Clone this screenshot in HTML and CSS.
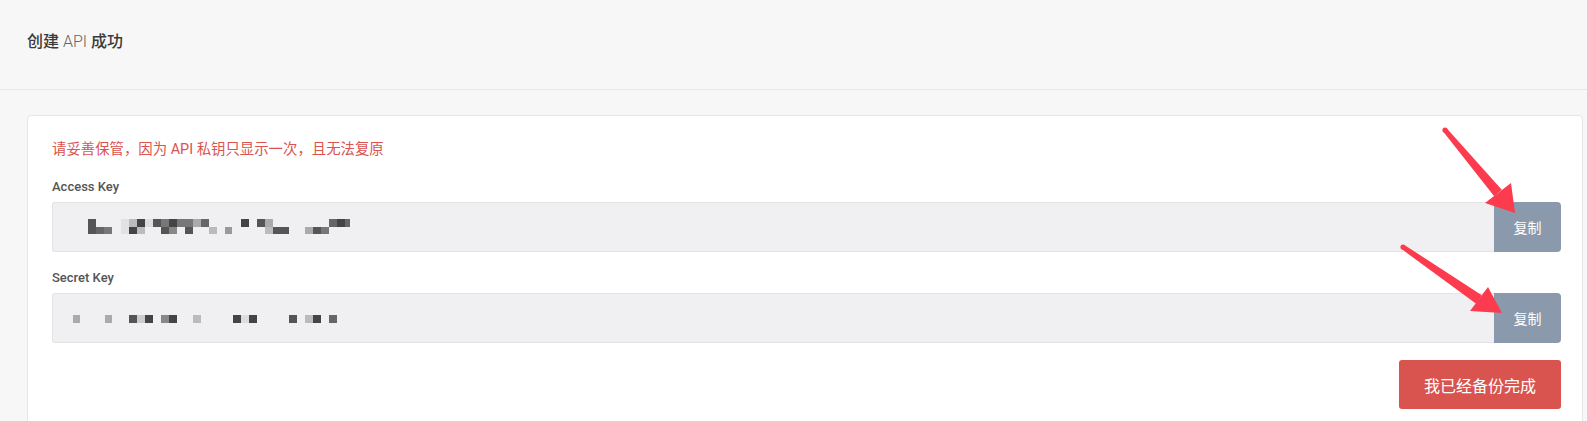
FILE: index.html
```html
<!DOCTYPE html>
<html>
<head>
<meta charset="utf-8">
<title>创建 API 成功</title>
<link rel="stylesheet" href="styles.css">
</head>
<body>

<div class="page-head">
	<h1>创建 <span class="light">API</span> 成功</h1>
</div>

<div class="main">
	<div class="card">
		<p class="warn">请妥善保管，因为 API 私钥只显示一次，且无法复原</p>

		<label class="field-label">Access Key</label>
		<div class="key-group">
			<div class="key-value">
				<svg class="blur" width="270" height="16" viewBox="0 0 270 16">
					<rect x="0" y="0" width="8" height="8" fill="#555"/>
					<rect x="0" y="8" width="8" height="7" fill="#555"/>
					<rect x="8" y="8" width="8" height="7" fill="#666"/>
					<rect x="16" y="8" width="8" height="7" fill="#777"/>
					<rect x="33" y="0" width="8" height="15" fill="#e2e2e4"/>
					<rect x="41" y="0" width="8" height="8" fill="#bbb"/>
					<rect x="41" y="8" width="8" height="7" fill="#444"/>
					<rect x="49" y="0" width="8" height="8" fill="#444"/>
					<rect x="49" y="8" width="8" height="7" fill="#bbb"/>
					<rect x="57" y="0" width="8" height="8" fill="#ddd"/>
					<rect x="65" y="0" width="8" height="8" fill="#555"/>
					<rect x="73" y="0" width="8" height="8" fill="#777"/>
					<rect x="73" y="8" width="8" height="7" fill="#555"/>
					<rect x="81" y="0" width="8" height="8" fill="#444"/>
					<rect x="81" y="8" width="8" height="7" fill="#888"/>
					<rect x="89" y="0" width="8" height="8" fill="#777"/>
					<rect x="97" y="0" width="8" height="8" fill="#777"/>
					<rect x="97" y="8" width="8" height="7" fill="#555"/>
					<rect x="105" y="0" width="8" height="8" fill="#aaa"/>
					<rect x="113" y="0" width="8" height="8" fill="#666"/>
					<rect x="121" y="8" width="8" height="7" fill="#bbb"/>
					<rect x="137" y="8" width="7" height="7" fill="#999"/>
					<rect x="153" y="0" width="8" height="8" fill="#444"/>
					<rect x="169" y="0" width="8" height="8" fill="#555"/>
					<rect x="177" y="0" width="8" height="8" fill="#aaa"/>
					<rect x="177" y="8" width="8" height="7" fill="#bbb"/>
					<rect x="185" y="8" width="16" height="7" fill="#555"/>
					<rect x="217" y="8" width="8" height="7" fill="#aaa"/>
					<rect x="225" y="8" width="8" height="7" fill="#555"/>
					<rect x="233" y="8" width="8" height="7" fill="#777"/>
					<rect x="241" y="0" width="8" height="8" fill="#666"/>
					<rect x="249" y="0" width="8" height="8" fill="#444"/>
					<rect x="257" y="0" width="5" height="8" fill="#666"/>
				</svg>
			</div>
			<button class="copy">复制</button>
		</div>

		<label class="field-label">Secret Key</label>
		<div class="key-group">
			<div class="key-value">
				<svg class="blur secret" width="270" height="8" viewBox="0 0 270 8">
					<rect x="0" y="0" width="7" height="8" fill="#aaa"/>
					<rect x="32" y="0" width="7" height="8" fill="#aaa"/>
					<rect x="56" y="0" width="8" height="8" fill="#555"/>
					<rect x="64" y="0" width="8" height="8" fill="#ccc"/>
					<rect x="72" y="0" width="8" height="8" fill="#444"/>
					<rect x="88" y="0" width="8" height="8" fill="#888"/>
					<rect x="96" y="0" width="8" height="8" fill="#444"/>
					<rect x="120" y="0" width="8" height="8" fill="#bbb"/>
					<rect x="160" y="0" width="8" height="8" fill="#444"/>
					<rect x="168" y="0" width="8" height="8" fill="#ddd"/>
					<rect x="176" y="0" width="8" height="8" fill="#444"/>
					<rect x="216" y="0" width="8" height="8" fill="#555"/>
					<rect x="232" y="0" width="8" height="8" fill="#bbb"/>
					<rect x="240" y="0" width="8" height="8" fill="#444"/>
					<rect x="256" y="0" width="8" height="8" fill="#666"/>
				</svg>
			</div>
			<button class="copy">复制</button>
		</div>

		<div class="actions">
			<button class="done">我已经备份完成</button>
		</div>
	</div>
</div>

<svg class="arrows" width="1587" height="421" viewBox="0 0 1587 421">
	<g fill="#fc3b4f">
		<circle cx="1445" cy="130" r="2.6"/>
		<polygon points="1443.1,131.6 1446.9,128.4 1501.8,189.8 1494.2,196.2"/>
		<polygon points="1511,183 1515,213 1485,203"/>

		<circle cx="1403" cy="247" r="2.6"/>
		<polygon points="1401.6,249.1 1404.4,244.9 1481.8,295.3 1476.2,303.7"/>
		<polygon points="1488,287 1502,313 1470,311"/>
	</g>
</svg>

</body>
</html>
```

FILE: styles.css
```css
body {
	margin: 0;
	background-color: #f7f7f7;
	font-family: Roboto, 'Helvetica Neue', Arial, 'Noto Sans CJK SC', sans-serif;
	color: #333;
}

.page-head {
	height: 90px;
	border-bottom: 1px solid #e7e7e7;
	padding: 31px 0 0 27px;
	box-sizing: border-box;
}

.page-head h1 {
	margin: 0;
	font-size: 16px;
	line-height: 22px;
	font-weight: 500;
	color: #3a3a3a;
}

.page-head h1 .light {
	font-weight: 300;
	color: #666;
}

.main {
	padding: 25px 4px 0 27px;
}

.card {
	background-color: #fff;
	border: 1px solid #e6e6e6;
	border-radius: 4px;
	padding: 24px 21px 24px 24px;
}

p.warn {
	margin: 0 0 18px 0;
	font-size: 14.4px;
	line-height: 20px;
	color: #d9534f;
}

label.field-label {
	display: block;
	font-size: 13px;
	line-height: 18px;
	font-weight: 500;
	color: #555;
	margin-bottom: 6px;
}

.key-group {
	display: flex;
	height: 50px;
	margin-bottom: 17px;
}

.key-value {
	flex: 1;
	display: flex;
	align-items: center;
	background-color: #f0f0f2;
	border: 1px solid #e3e3e6;
	border-right: none;
	border-radius: 3px 0 0 3px;
	padding-left: 35px;
}

.key-value svg.secret {
	margin-left: -15px;
	margin-top: 1px;
}

button.copy {
	width: 67px;
	border: none;
	border-radius: 0 4px 4px 0;
	background-color: #8a99ab;
	color: #fff;
	font-family: inherit;
	font-size: 14px;
	padding: 0;
}

.actions {
	display: flex;
	justify-content: flex-end;
	margin-top: 16px;
}

button.done {
	width: 162px;
	height: 49px;
	border: none;
	border-radius: 3px;
	background-color: #d9534f;
	color: #fff;
	font-family: inherit;
	font-size: 16px;
	padding: 0;
}

svg.arrows {
	position: absolute;
	left: 0;
	top: 0;
	pointer-events: none;
}
```
